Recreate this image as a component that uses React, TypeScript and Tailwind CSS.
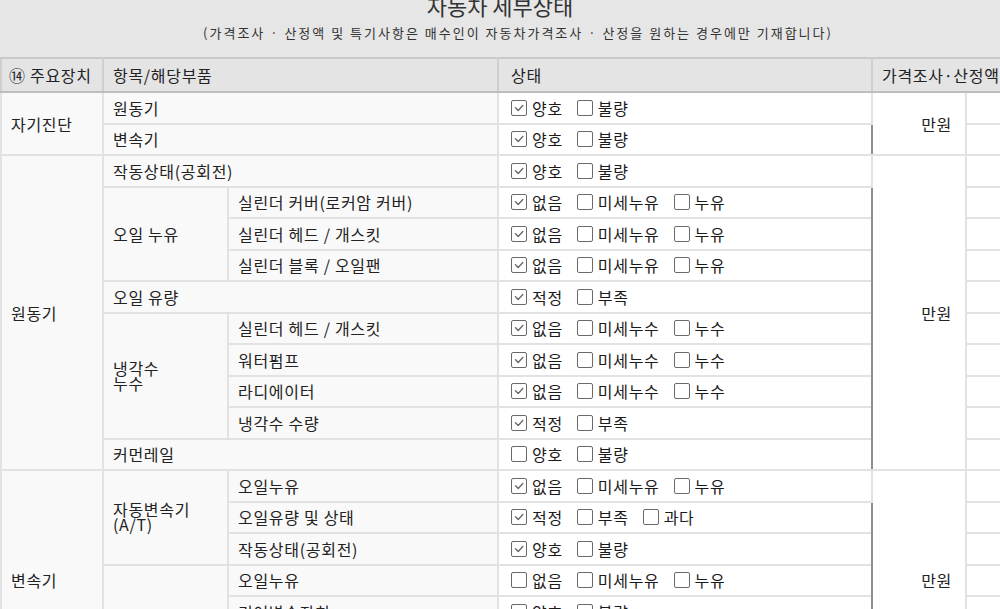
import React from 'react';

type Opt = [string, boolean];

interface Row {
  main?: [string, number];
  group?: [string, number, number];
  part?: string;
  opts: Opt[];
  price?: number;
}

const good = (on: boolean): Opt[] => [['양호', on], ['불량', false]];
const level = (on: boolean): Opt[] => [['적정', on], ['부족', false]];
const leak = (on: boolean, w: string): Opt[] => [['없음', on], ['미세' + w, false], [w, false]];

const ROWS: Row[] = [
  { main: ['자기진단', 2], group: ['원동기', 1, 2], opts: good(true), price: 2 },
  { group: ['변속기', 1, 2], opts: good(true) },
  { main: ['원동기', 10], group: ['작동상태(공회전)', 1, 2], opts: good(true), price: 10 },
  { group: ['오일 누유', 3, 1], part: '실린더 커버(로커암 커버)', opts: leak(true, '누유') },
  { part: '실린더 헤드 / 개스킷', opts: leak(true, '누유') },
  { part: '실린더 블록 / 오일팬', opts: leak(true, '누유') },
  { group: ['오일 유량', 1, 2], opts: level(true) },
  { group: ['냉각수\n누수', 4, 1], part: '실린더 헤드 / 개스킷', opts: leak(true, '누수') },
  { part: '워터펌프', opts: leak(true, '누수') },
  { part: '라디에이터', opts: leak(true, '누수') },
  { part: '냉각수 수량', opts: level(true) },
  { group: ['커먼레일', 1, 2], opts: good(false) },
  { main: ['변속기', 7], group: ['자동변속기\n(A/T)', 3, 1], part: '오일누유', opts: leak(true, '누유'), price: 7 },
  { part: '오일유량 및 상태', opts: [['적정', true], ['부족', false], ['과다', false]] },
  { part: '작동상태(공회전)', opts: good(true) },
  { group: ['수동변속기\n(M/T)', 4, 1], part: '오일누유', opts: leak(false, '누유') },
  { part: '기어변속장치', opts: good(false) },
  { part: '오일유량 및 상태', opts: [['적정', false], ['부족', false], ['과다', false]] },
  { part: '작동상태(공회전)', opts: good(false) },
];

function Box({ checked }: { checked: boolean }) {
  return (
    <span className="inline-flex h-[16px] w-[16px] shrink-0 items-center justify-center rounded-[2px] border border-[#6a6a6a] bg-white">
      {checked && (
        <svg width="10" height="8" viewBox="0 0 10 8" fill="none" stroke="#6a6a6a" strokeWidth="1.4" strokeLinecap="round" strokeLinejoin="round">
          <path d="M1.5 3.8 L4.2 6.4 L8.8 1.6" />
        </svg>
      )}
    </span>
  );
}

const labelCell = 'border-2 border-[#e2e2e2] bg-[#f9f9f9] px-[9px] align-middle';
const headCell = 'border-2 border-t-[#c9c9c9] border-b-[#bdbdbd] text-left font-normal';

export default function App() {
  return (
    <div className="h-[609px] w-[1000px] overflow-hidden bg-white text-[16px] tracking-[0.7px] text-[#222] [font-family:'Noto_Sans_CJK_KR','Noto_Sans',sans-serif]">
      {/* page heading, scrolled so the title sits half off screen */}
      <div className="flow-root h-[57px] bg-[#e6e6e6] text-[#333]">
        <div className="-mt-[6px] h-[22px] text-center text-[22px] leading-[22px] tracking-normal">자동차 세부상태</div>
        <div className="mt-[9px] pl-[36px] text-center text-[13px] leading-[16px] tracking-[2px] text-[#333]">
          (가격조사 · 산정액 및 특기사항은 매수인이 자동차가격조사 · 산정을 원하는 경우에만 기재합니다)
        </div>
      </div>

      <table className="w-[1120px] table-fixed border-collapse">
        <colgroup>
          <col className="w-[102px]" />
          <col className="w-[125px]" />
          <col className="w-[270px]" />
          <col className="w-[374px]" />
          <col className="w-[94px]" />
          <col className="w-[155px]" />
        </colgroup>
        <thead>
          <tr className="h-[34px] bg-[#e4e4e4]">
            <th className={`${headCell} border-x-[#cfcfcf] px-[7px]`}>⑭ 주요장치</th>
            <th colSpan={2} className={`${headCell} border-x-[#cfcfcf] px-[9px]`}>항목/해당부품</th>
            <th className={`${headCell} border-x-[#cfcfcf] px-[12px]`}>상태</th>
            <th colSpan={2} className={`${headCell} border-r-[#cfcfcf] border-l-[#8e8e8e] px-[9px] whitespace-nowrap`}>가격조사·산정액</th>
          </tr>
        </thead>
        <tbody>
          {ROWS.map((r, i) => (
            <tr key={i} className="h-[31.5px]">
              {r.main && (
                <td rowSpan={r.main[1]} className={`${labelCell} px-[7px]`}>{r.main[0]}</td>
              )}
              {r.group && (
                <td rowSpan={r.group[1]} colSpan={r.group[2]} className={`${labelCell} whitespace-pre-line ${r.group[0].includes('\n') ? 'leading-[15px]' : 'leading-[20px]'}`}>
                  {r.group[0]}
                </td>
              )}
              {r.part && <td className={labelCell}>{r.part}</td>}
              <td className="border-2 border-[#e2e2e2] bg-white pl-[12px] align-middle">
                <div className="flex items-center text-[#1a1a1a]">
                  {r.opts.map(([t, on]) => (
                    <span key={t} className="mr-[14px] flex items-center gap-[5px]">
                      <Box checked={on} />
                      <span className="leading-[18px]">{t}</span>
                    </span>
                  ))}
                </div>
              </td>
              {r.price && (
                <td rowSpan={r.price} className="border-2 border-[#e2e2e2] border-l-[#8e8e8e] bg-white pr-[13px] text-right align-middle">
                  만원
                </td>
              )}
              <td className="border-2 border-[#e2e2e2] bg-white" />
            </tr>
          ))}
        </tbody>
      </table>
    </div>
  );
}
